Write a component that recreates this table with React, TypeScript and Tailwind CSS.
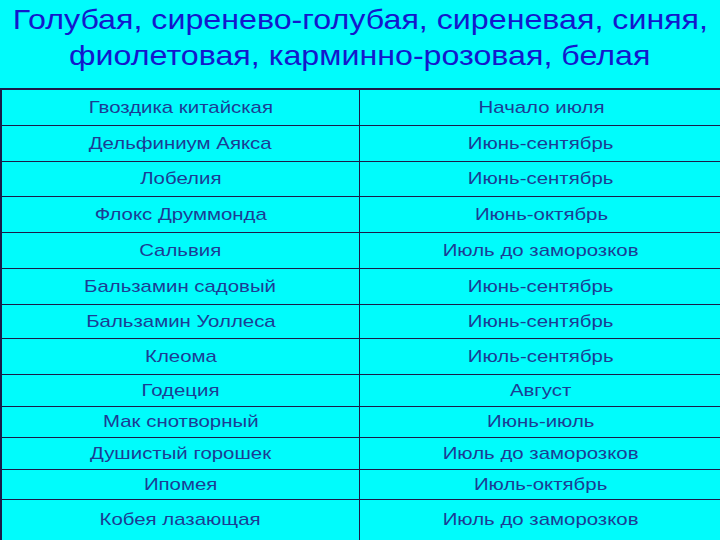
import React from "react";

const rows: { a: string; b: string; h: string; last?: boolean }[] = [
  { a: "Гвоздика китайская", b: "Начало июля", h: "h-[36px]" },
  { a: "Дельфиниум Аякса", b: "Июнь-сентябрь", h: "h-[36px]" },
  { a: "Лобелия", b: "Июнь-сентябрь", h: "h-[35px]" },
  { a: "Флокс Друммонда", b: "Июнь-октябрь", h: "h-[36px]" },
  { a: "Сальвия", b: "Июль до заморозков", h: "h-[36px]" },
  { a: "Бальзамин садовый", b: "Июнь-сентябрь", h: "h-[36px]" },
  { a: "Бальзамин Уоллеса", b: "Июнь-сентябрь", h: "h-[34px]" },
  { a: "Клеома", b: "Июль-сентябрь", h: "h-[36px]" },
  { a: "Годеция", b: "Август", h: "h-[32px]" },
  { a: "Мак снотворный", b: "Июнь-июль", h: "h-[31px]" },
  { a: "Душистый горошек", b: "Июль до заморозков", h: "h-[32px]" },
  { a: "Ипомея", b: "Июль-октябрь", h: "h-[30px]" },
  { a: "Кобея лазающая", b: "Июль до заморозков", h: "h-[40px]", last: true },
];

function Cell({ text, h, last, right }: { text: string; h: string; last?: boolean; right?: boolean }) {
  return (
    <div
      className={`${h} flex items-center justify-center border-[#1b1b48] ${right ? "" : "border-r"} ${last ? "" : "border-b"}`}
    >
      <span className="inline-block scale-x-[1.2] whitespace-nowrap">{text}</span>
    </div>
  );
}

export default function App() {
  return (
    <div
      className="w-[720px] h-[540px] overflow-hidden bg-[#00fcfc] flex flex-col"
      style={{ fontFamily: '"Liberation Sans", Arial, sans-serif' }}
    >
      <div className="h-[90px] flex flex-col items-center pt-[2px] text-[28px] leading-[36px] text-[#1418cc] whitespace-nowrap">
        <span className="inline-block scale-x-[1.15]">Голубая, сиренево-голубая, сиреневая, синяя,</span>
        <span className="inline-block scale-x-[1.15]">фиолетовая, карминно-розовая, белая</span>
      </div>
      <div className="border-t-2 border-l-2 border-[#1b1b48] w-[722px] grid grid-cols-[358px_362px] text-[17px] text-[#1c3c94]">
        {rows.map((r, i) => (
          <React.Fragment key={i}>
            <Cell text={r.a} h={r.h} last={r.last} />
            <Cell text={r.b} h={r.h} last={r.last} right />
          </React.Fragment>
        ))}
      </div>
    </div>
  );
}
